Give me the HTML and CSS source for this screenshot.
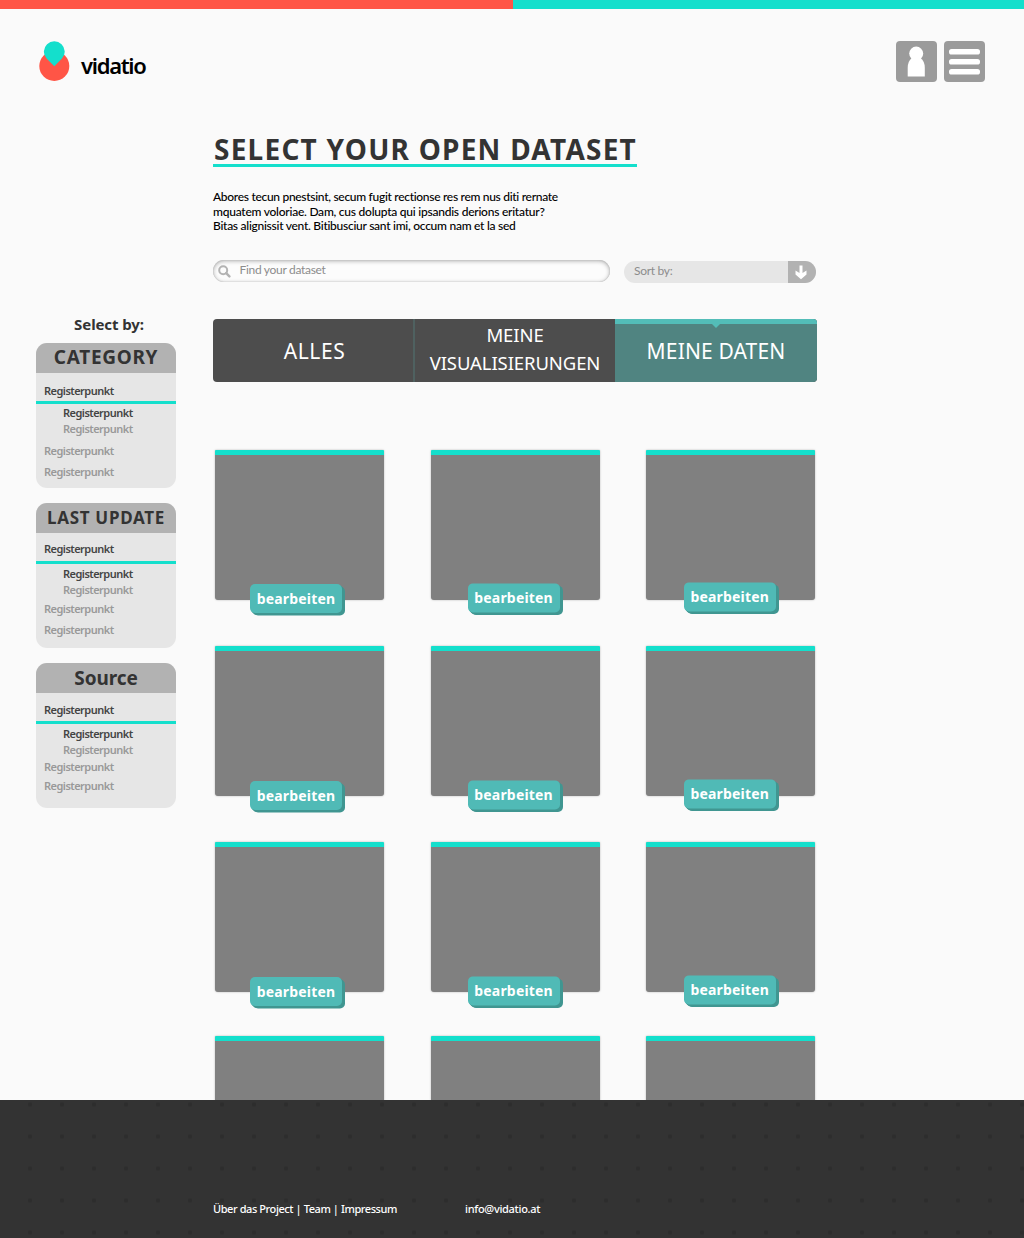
FILE: index.html
```
<!DOCTYPE html>
<html lang="de">
<head>
<meta charset="utf-8">
<title>vidatio</title>
<link rel="stylesheet" href="styles.css">
</head>
<body>
<div class="page">
  <div class="stripe"><span class="stripe-red"></span><span class="stripe-teal"></span></div>
  <header class="header">
    <a class="logo">
      <svg class="logo-mark" width="32" height="42" viewBox="0 0 32 42"><circle cx="15.3" cy="25" r="15" fill="#ff5546"/><path d="M15.3 25.3 L7.6 17.6 A10.4 10.4 0 1 1 23 17.6 Z" fill="#14dfcc"/></svg>
      <span class="logo-text">vidatio</span>
    </a>
    <nav class="tools">
      <svg width="41" height="41" viewBox="0 0 41 41"><rect width="41" height="41" rx="4" fill="#9b9b9b"/><circle cx="20.2" cy="12.6" r="7" fill="#fff"/><path d="M16 17 H24.4 Q28.8 20 28.8 27 V35.5 H11.7 V27 Q11.7 20 16 17Z" fill="#fff"/></svg>
      <svg width="41" height="41" viewBox="0 0 41 41"><rect width="41" height="41" rx="4" fill="#9b9b9b"/><g fill="#fff"><rect x="5" y="8" width="31" height="5.6" rx="2.6"/><rect x="5" y="18" width="31" height="5.6" rx="2.6"/><rect x="5" y="28" width="31" height="5.6" rx="2.6"/></g></svg>
    </nav>
  </header>
  <div class="columns">
    <aside class="sidebar">
      <h2 class="select-by"><span>Select by:</span></h2>
      <section class="panel panel-category">
        <h3 class="panel-title"><span>CATEGORY</span></h3>
        <p class="item active">Registerpunkt</p>
        <p class="item sub active">Registerpunkt</p>
        <p class="item sub">Registerpunkt</p>
        <p class="item">Registerpunkt</p>
        <p class="item">Registerpunkt</p>
      </section>
      <section class="panel panel-update">
        <h3 class="panel-title"><span>LAST UPDATE</span></h3>
        <p class="item active">Registerpunkt</p>
        <p class="item sub active">Registerpunkt</p>
        <p class="item sub">Registerpunkt</p>
        <p class="item">Registerpunkt</p>
        <p class="item">Registerpunkt</p>
      </section>
      <section class="panel panel-source">
        <h3 class="panel-title"><span>Source</span></h3>
        <p class="item active">Registerpunkt</p>
        <p class="item sub active">Registerpunkt</p>
        <p class="item sub">Registerpunkt</p>
        <p class="item">Registerpunkt</p>
        <p class="item">Registerpunkt</p>
      </section>
    </aside>
    <main class="main">
      <h1 class="title">SELECT YOUR OPEN DATASET</h1>
      <p class="intro"><span class="l1">Abores tecun pnestsint, secum fugit rectionse res rem nus diti rernate</span><br><span class="l2">mquatem voloriae. Dam, cus dolupta qui ipsandis derions eritatur?</span><br><span class="l3">Bitas alignissit vent. Bitibusciur sant imi, occum nam et la sed</span></p>
      <div class="filters">
        <div class="search">
          <svg width="13" height="13" viewBox="0 0 13 13" fill="none" stroke="#b3b3b3"><circle cx="5.2" cy="5.2" r="4" stroke-width="2"/><path d="M8.2 8.2 L11.4 11.4" stroke-width="2.4" stroke-linecap="round"/></svg>
          <span>Find your dataset</span>
        </div>
        <div class="sort">
          <span class="sort-label">Sort by:</span>
          <span class="sort-button"><svg width="12" height="15" viewBox="0 0 12 15"><path d="M4.5 0.5 H7.5 V8 L11.5 5.6 V9.5 L6 14.3 L0.5 9.5 V5.6 L4.5 8Z" fill="#fff"/></svg></span>
        </div>
      </div>
      <nav class="tabs">
        <a class="tab tab-all"><span>ALLES</span></a>
        <a class="tab tab-vis"><span class="v1">MEINE</span><span class="v2">VISUALISIERUNGEN</span></a>
        <a class="tab tab-data"><span>MEINE DATEN</span></a>
      </nav>
      <div class="cards">
        <article class="card"><a class="edit">bearbeiten</a></article>
        <article class="card"><a class="edit">bearbeiten</a></article>
        <article class="card"><a class="edit">bearbeiten</a></article>
        <article class="card low"><a class="edit">bearbeiten</a></article>
        <article class="card low"><a class="edit">bearbeiten</a></article>
        <article class="card low"><a class="edit">bearbeiten</a></article>
        <article class="card low"><a class="edit">bearbeiten</a></article>
        <article class="card low"><a class="edit">bearbeiten</a></article>
        <article class="card low"><a class="edit">bearbeiten</a></article>
        <article class="card"></article>
        <article class="card"></article>
        <article class="card"></article>
      </div>
    </main>
  </div>
</div>
<footer class="footer">
  <span class="links">Über das Project | Team | Impressum</span>
  <span class="mail">info@vidatio.at</span>
</footer>
</body>
</html>
```
FILE: styles.css
```
* { box-sizing: border-box; }
body {
  margin: 0;
  background: #fafafa;
  color: #333;
  font-family: "Noto Sans", sans-serif;
}
h1, h2, h3, p { margin: 0; }
svg { display: block; flex: none; }
span { white-space: nowrap; }

.page { height: 1100px; overflow: hidden; }
.stripe { display: flex; height: 8.5px; }
.stripe-red { width: 513px; background: #ff5546; }
.stripe-teal { flex: 1; background: #14dfcc; }

.header {
  display: flex;
  justify-content: space-between;
  height: 122.5px;
  padding: 32.5px 39px 0;
}
.logo { display: flex; }
.logo-text {
  margin-left: 10px;
  color: #000;
  font-size: 22px;
  font-weight: 600;
  line-height: 32px;
  padding-top: 8px;
  letter-spacing: -1.3px;
}
.tools { display: flex; gap: 7px; }

.columns { display: grid; grid-template-columns: 140px 604px; column-gap: 37px; padding-left: 36px; }

.sidebar { padding-top: 183px; }
.select-by {
  height: 28.5px;
  padding-left: 6px;
  text-align: center;
  font-size: 15px;
  font-weight: 700;
  line-height: 21px;
  letter-spacing: -0.1px;
}
.panel {
  height: 145.5px;
  margin-bottom: 14.7px;
  border-radius: 11px;
  background: #e6e6e6;
  overflow: hidden;
}
.panel-title {
  height: 30px;
  background: #b2b2b2;
  text-align: center;
  font-size: 19px;
  font-weight: 700;
  line-height: 28px;
  letter-spacing: 0.7px;
}
.panel-update .panel-title { font-size: 17px; line-height: 30px; letter-spacing: 0.7px; }
.panel-source .panel-title { font-size: 19px; letter-spacing: -0.1px; line-height: 30px; }
.item {
  padding-left: 8px;
  color: #999;
  font-size: 11px;
  font-weight: 600;
  line-height: 16px;
  letter-spacing: -0.53px;
}
.item.active { color: #444; }
.item.sub { padding-left: 27px; }
.panel-title + .item { height: 21px; margin: 10.5px 0 1px; border-bottom: 3px solid #14dfcc; }
.item.sub + .item:not(.sub) { margin-top: 6px; }
.item:last-child { margin-top: 5px; }
.panel-update .panel-title + .item { height: 23px; margin: 8px 0 2.6px; }
.panel-update .sub + .item:not(.sub) { margin-top: 3px; }
.panel-source .panel-title + .item { height: 22px; margin: 9.2px 0 2px; }
.panel-source .sub + .item:not(.sub) { margin-top: 1px; }
.panel-source .item:last-child { margin-top: 3px; }

.title {
  width: 423.5px;
  height: 36px;
  padding-left: 1px;
  border-bottom: 3px solid #14dfcc;
  font-size: 28px;
  font-weight: 700;
  line-height: 37px;
  letter-spacing: 1.24px;
  white-space: nowrap;
}
.intro {
  height: 93px;
  padding-top: 23px;
  color: #000;
  font-family: Lato, sans-serif;
  font-size: 12px;
  font-weight: 500;
  line-height: 14.5px;
  letter-spacing: -0.3px;
}
.l2 { letter-spacing: -0.24px; }
.l3 { letter-spacing: -0.27px; }
.filters { display: flex; gap: 14px; height: 59px; font-family: Lato, sans-serif; font-size: 12px; letter-spacing: -0.3px; color: #8c8c8c; }
.search {
  display: flex;
  width: 397px;
  height: 22px;
  padding: 5px 5px 0;
  border-radius: 11px;
  background: #fcfcfc;
  box-shadow: inset 0 1px 4px #aaa, inset 0 0 1px #999;
}
.search span { margin-left: 8.5px; line-height: 10px; }
.sort {
  display: flex;
  justify-content: space-between;
  width: 192px;
  height: 22px;
  margin-top: 1px;
  border-radius: 11px;
  background: #e6e6e6;
  overflow: hidden;
}
.sort-label { padding-left: 10px; line-height: 20px; }
.sort-button { width: 28px; padding: 4px 0 0 7px; background: #b2b2b2; }

.tabs { display: flex; height: 63px; border-radius: 4px; background: #4d4d4d; color: #fff; overflow: hidden; }
.tab {
  display: flex;
  flex-direction: column;
  align-items: center;
  justify-content: center;
  width: 202px;
  font-size: 21px;
  font-weight: 400;
  line-height: 28px;
}
.tab-all { padding-left: 3px; border-right: 2px solid #4f6160; letter-spacing: 0.6px; }
.tab-vis { width: 200px; font-size: 18.5px; padding-bottom: 3px; letter-spacing: -0.1px; }
.tab-data { position: relative; border-top: 5px solid #53bdb8; background: #508481; padding-bottom: 5px; letter-spacing: 0.15px; }
.tab-data::before {
  content: "";
  position: absolute;
  top: 0;
  left: 97px;
  border: 4.5px solid transparent;
  border-top-color: #53bdb8;
  border-bottom: 0;
}

.cards {
  display: grid;
  grid-template-columns: 169px 169px 169px;
  grid-template-rows: 150px 150px 150px 150px;
  gap: 46px 46.6px;
  padding: 68px 2px 0;
}
.card {
  position: relative;
  border-top: 5px solid #14dfcc;
  border-radius: 1px 1px 3px 3px;
  background: #808080;
  box-shadow: 0 0 2px rgba(0, 0, 0, 0.3);
}
.card:nth-child(n+10) { margin-top: -2px; }
.edit {
  position: absolute;
  left: 35px;
  top: 129px;
  width: 92px;
  height: 29px;
  border-radius: 5px;
  background: #50bab6;
  box-shadow: 1px 1px #409691, 2px 2px #409691, 3px 2.5px #409691;
  color: #fff;
  text-align: center;
  font-size: 14px;
  font-weight: 700;
  line-height: 29px;
  letter-spacing: 0.18px;
}
.card.low .edit { top: 130px; }
.card:nth-child(3n+2) .edit { left: 37px; transform: translateY(-0.6px); }
.card:nth-child(3n) .edit { left: 37.5px; transform: translateY(-1.6px); }

.footer {
  display: flex;
  height: 138px;
  padding: 101px 0 0 213px;
  background: #333 radial-gradient(circle at 16px 16px, #2d2d2d 2px, transparent 2.4px) 14px -11.5px / 32px 32px;
  color: #fff;
  font-size: 11px;
  font-weight: 500;
  line-height: 16px;
  letter-spacing: -0.42px;
}
.links { width: 252px; }
.mail { letter-spacing: -0.3px; }
```
